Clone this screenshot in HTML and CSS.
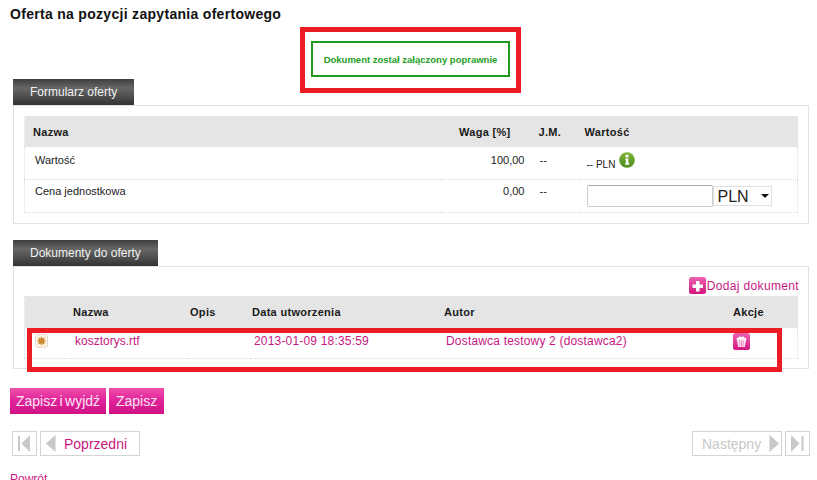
FILE: index.html
```html
<!DOCTYPE html>
<html lang="pl">
<head>
  <meta charset="UTF-8" />
  <title>Oferta na pozycji zapytania ofertowego</title>
  <meta name="viewport" content="width=device-width, initial-scale=1.0" />
  <link rel="stylesheet" href="styles.css">
</head>
<body>

  <h1>Oferta na pozycji zapytania ofertowego</h1>

  <div class="notice">Dokument został załączony poprawnie</div>

  <div class="tab tab-form">Formularz oferty</div>
  <div class="panel panel-form">
    <table class="grid form-grid">
      <thead>
        <tr>
          <th class="col-name">Nazwa</th>
          <th class="col-weight">Waga [%]</th>
          <th class="col-unit">J.M.</th>
          <th class="col-value">Wartość</th>
        </tr>
      </thead>
      <tbody>
        <tr class="row-first">
          <td>Wartość</td>
          <td class="num">100,00</td>
          <td>--</td>
          <td class="value-cell">
            <span class="small">-- PLN</span>
            <svg class="info" width="16" height="16" viewBox="0 0 16 16"><defs><linearGradient id="infoFill" x1="0" y1="0" x2="0" y2="1"><stop offset="0" stop-color="#7fb53a"/><stop offset="1" stop-color="#4c8a1c"/></linearGradient></defs><circle cx="8" cy="8" r="7.8" fill="url(#infoFill)"/><circle cx="8" cy="4" r="1.6" fill="#fff"/><path d="M6.200 6.500h3.200v5h1v1.300H5.900v-1.300h1V7.800h-.7z" fill="#fff"/></svg>
          </td>
        </tr>
        <tr class="row-second">
          <td>Cena jednostkowa</td>
          <td class="num">0,00</td>
          <td>--</td>
          <td class="value-cell">
            <div class="price">
              <input type="text" />
              <div class="select-wrap">
                <select><option>PLN</option></select>
              </div>
            </div>
          </td>
        </tr>
      </tbody>
    </table>
  </div>

  <div class="tab tab-docs">Dokumenty do oferty</div>
  <div class="panel panel-docs">
    <div class="add-row">
      <a class="add-link" href="#">
        <svg width="17" height="17" viewBox="0 0 17 17"><defs><linearGradient id="pinkFill" x1="0" y1="0" x2="0" y2="1"><stop offset="0" stop-color="#ee62b0"/><stop offset="1" stop-color="#d3167f"/></linearGradient></defs><rect width="17" height="17" rx="2.500" fill="url(#pinkFill)"/><path d="M7 4h3.500v3.500H14V11h-3.500v3.500H7V11H3.500V7.500H7z" fill="#fff"/></svg>
        <span>Dodaj dokument</span>
      </a>
    </div>
    <table class="grid doc-grid">
      <thead>
        <tr>
          <th class="col-icon"></th>
          <th class="col-file">Nazwa</th>
          <th class="col-desc">Opis</th>
          <th class="col-date">Data utworzenia</th>
          <th class="col-author">Autor</th>
          <th class="col-actions">Akcje</th>
        </tr>
      </thead>
      <tbody>
        <tr>
          <td class="icon-cell">
            <svg class="file-icon" width="13" height="14" viewBox="0 0 13 14"><rect x=".5" y=".5" width="12" height="13" rx="2.500" fill="#fdf3e2" stroke="#e6dccf"/><circle cx="6.500" cy="7" r="2.800" fill="#b9691a"/><path d="M6.500 2.800v8.400M2.300 7h8.400M3.500 4l6 6M9.500 4l-6 6" stroke="#d08a2c" stroke-width="1.200"/></svg>
          </td>
          <td><a href="#">kosztorys.rtf</a></td>
          <td></td>
          <td><a class="spaced" href="#">2013-01-09 18:35:59</a></td>
          <td><a class="spaced" href="#">Dostawca testowy 2 (dostawca2)</a></td>
          <td class="action-cell">
            <svg width="17" height="17" viewBox="0 0 17 17"><rect width="17" height="17" rx="2.500" fill="url(#pinkFill)"/><path d="M3.800 6.500h9.400l-1.400 7.500H5.200z" fill="#fde3f1"/><path d="M3.600 6.800c-.6-1.600 1-2.400 1.800-2 .3-1.500 2-1.800 3-.9 1-.9 2.700-.6 3 .9.900-.4 2.400.4 1.900 2z" fill="#fff"/><path d="M6.700 7.500 7 13.500M8.500 7.500v6M10.300 7.500 10 13.500" stroke="#ee7fbc" stroke-width=".8"/></svg>
          </td>
        </tr>
      </tbody>
    </table>
  </div>

  <div class="save-row">
    <button type="button">Zapisz i wyjdź</button>
    <button type="button">Zapisz</button>
  </div>

  <div class="pager">
    <div class="pager-group">
      <a class="page-btn page-end" href="#">
        <svg width="15" height="17" viewBox="0 0 15 17"><rect x="1" y="1" width="2" height="15" fill="#c8c8c8"/><path d="M13 0v17L4.500 8.500z" fill="#c8c8c8"/></svg>
      </a>
      <a class="page-btn page-prev" href="#">
        <svg width="10" height="17" viewBox="0 0 10 17"><path d="M9.500 0v17L0 8.500z" fill="#c8c8c8"/></svg>
        <span>Poprzedni</span>
      </a>
    </div>
    <div class="pager-group">
      <a class="page-btn page-next" href="#">
        <span>Następny</span>
        <svg width="10" height="17" viewBox="0 0 10 17"><path d="M.5 0v17L10 8.500z" fill="#c8c8c8"/></svg>
      </a>
      <a class="page-btn page-end" href="#">
        <svg width="15" height="17" viewBox="0 0 15 17"><path d="M1 0v17l8.500-8.500z" fill="#c8c8c8"/><rect x="11.500" y="1" width="2" height="15" fill="#c8c8c8"/></svg>
      </a>
    </div>
  </div>

  <a class="back" href="#">Powrót</a>

  <!-- red annotation frames drawn over the page -->
  <div class="frame frame-notice"></div>
  <div class="frame frame-row"></div>

</body>
</html>
```

FILE: styles.css
```css
body {
  font-family: "Liberation Sans", Arial, sans-serif;
  font-size: 11px;
  color: #222;
  background-color: #fff;
  margin: 0;
  position: relative;
}

a {
  color: #c8187f;
  text-decoration: none;
}

h1 {
  font-size: 14px;
  line-height: 16px;
  letter-spacing: .3px;
  color: #111;
  margin: 6px 10px 19px;
}

.notice {
  box-sizing: border-box;
  width: 199px;
  height: 36px;
  margin-left: 311px;
  border: 2px solid #1f9a1f;
  color: #24a024;
  font-size: 9.5px;
  font-weight: bold;
  line-height: 33px;
  text-align: center;
}

.tab {
  box-sizing: border-box;
  height: 26px;
  margin-left: 13px;
  padding-left: 17px;
  color: #f2f2f2;
  font-size: 12px;
  line-height: 27px;
  background: linear-gradient(#3f3f3f, #666 35%, #4c4c4c 70%, #333);
}

.tab-form {
  width: 121px;
  margin-top: 2px;
}

.tab-docs {
  width: 145px;
}

.panel {
  box-sizing: border-box;
  width: 796px;
  margin-left: 13px;
  padding: 10px;
  border: 1px solid #e2e2e2;
}

.panel-form {
  height: 119px;
  margin-bottom: 16px;
}

.panel-docs {
  height: 103px;
  margin-bottom: 19px;
}

.grid {
  width: 774px;
  table-layout: fixed;
  border-collapse: collapse;
  border-left: 1px dotted #ddd;
  border-right: 1px dotted #ddd;
}

/* dithered grey like the header image */
.grid th {
  height: 31px;
  padding: 0;
  background: repeating-conic-gradient(#dedede 0 25%, #ececec 0 50%) 0 0 / 2px 2px;
  color: #1a1a1a;
  font-size: 11px;
  font-weight: bold;
  letter-spacing: .3px;
  text-align: left;
}

.grid td {
  padding: 0;
  border-bottom: 1px dotted #ddd;
}

.form-grid td:first-child {
  padding-left: 10px;
}

.row-first td {
  height: 26px;
  padding-bottom: 6px;
}

.row-second td {
  height: 22px;
  padding-bottom: 10px;
}

.col-name {
  width: 416px;
  padding-left: 8px !important;
  box-sizing: border-box;
}

.col-weight {
  width: 90px;
  padding-right: 20px !important;
  box-sizing: border-box;
  text-align: right !important;
}

.col-unit {
  width: 49px;
  padding-left: 8px !important;
  box-sizing: border-box;
}

.col-value {
  padding-left: 5px !important;
}

.form-grid td:nth-child(2) {
  padding-right: 6px;
  text-align: right;
}

.form-grid td:nth-child(3) {
  padding-left: 9px;
}

.form-grid .value-cell {
  padding-left: 7px;
  padding-bottom: 0;
  height: 32px;
}

.form-grid .row-first .value-cell {
  height: 28px;
  padding-bottom: 4px;
}

.small {
  font-size: 10px;
}

.info {
  margin-left: 1px;
  vertical-align: 0;
}

.price {
  display: flex;
  align-items: center;
}

.price input {
  box-sizing: border-box;
  width: 126px;
  height: 22px;
  margin: 0;
  border: 1px solid #ccc;
  border-top-color: #aaa;
  border-radius: 2px;
  background: #fff;
}

.select-wrap {
  position: relative;
  width: 59px;
  height: 20px;
}

/* small black arrow of the old select box */
.select-wrap::after {
  content: "";
  position: absolute;
  right: 3px;
  top: 8px;
  border-top: 4px solid #111;
  border-left: 4px solid transparent;
  border-right: 4px solid transparent;
}

.select-wrap select {
  appearance: none;
  box-sizing: border-box;
  display: block;
  width: 100%;
  height: 100%;
  margin: 0;
  padding: 0 0 0 4px;
  border: 1px solid #e0e0e0;
  border-radius: 0;
  background: #fff;
  color: #222;
  font-family: "Liberation Sans", Arial, sans-serif;
  font-size: 16px;
}

.add-row {
  display: flex;
  justify-content: flex-end;
  height: 19px;
  margin-right: -1px;
}

.add-link {
  display: flex;
  align-items: center;
  gap: 1px;
  height: 17px;
  font-size: 12px;
  letter-spacing: .35px;
}

.doc-grid th {
  height: 32px;
}

.doc-grid td {
  height: 30px;
  font-size: 12px;
}

.col-icon {
  width: 46px;
}

.col-file {
  width: 117px;
}

.col-desc {
  width: 62px;
}

.col-date {
  width: 192px;
}

.col-author {
  width: 289px;
}

.col-file,
.col-desc,
.col-date,
.col-author,
.col-actions {
  padding-left: 2px !important;
  box-sizing: border-box;
}

.doc-grid td a {
  display: block;
  padding: 0 0 4px 4px;
}

.doc-grid td a.spaced {
  letter-spacing: .18px;
}

.icon-cell {
  padding-left: 10px !important;
}

.file-icon {
  display: block;
  margin-top: -4px;
}

.action-cell svg {
  display: block;
  margin: -4px 0 0 2px;
}

.save-row {
  display: flex;
  gap: 3px;
  margin-left: 10px;
}

.save-row button {
  height: 26px;
  padding: 0 7px;
  border: none;
  background: linear-gradient(#f04fa9, #e0229a 50%, #cf1384);
  color: #fbe6f2;
  font-family: "Liberation Sans", Arial, sans-serif;
  font-size: 14px;
}

.save-row button:first-child {
  width: 96px;
  padding: 0;
  word-spacing: -1.5px;
}

.pager {
  display: flex;
  justify-content: space-between;
  width: 798px;
  margin: 17px 0 16px 12px;
}

.pager-group {
  display: flex;
  gap: 3px;
}

.page-btn {
  box-sizing: border-box;
  display: flex;
  align-items: center;
  height: 25px;
  border: 1px solid #d4d4d4;
  font-size: 14px;
}

.page-end {
  width: 25px;
  justify-content: center;
}

.page-prev {
  width: 100px;
  gap: 8px;
  padding-left: 5px;
}

.page-next {
  width: 90px;
  gap: 8px;
  padding-left: 9px;
  color: #c8c8c8;
}

.back {
  display: block;
  margin-left: 10px;
  font-size: 12px;
}

.frame {
  position: absolute;
  box-sizing: border-box;
  border: 5px solid #ec1c24;
}

.frame-notice {
  left: 300px;
  top: 27px;
  width: 221px;
  height: 66px;
}

.frame-row {
  left: 27px;
  top: 328px;
  width: 755px;
  height: 44px;
}
```
